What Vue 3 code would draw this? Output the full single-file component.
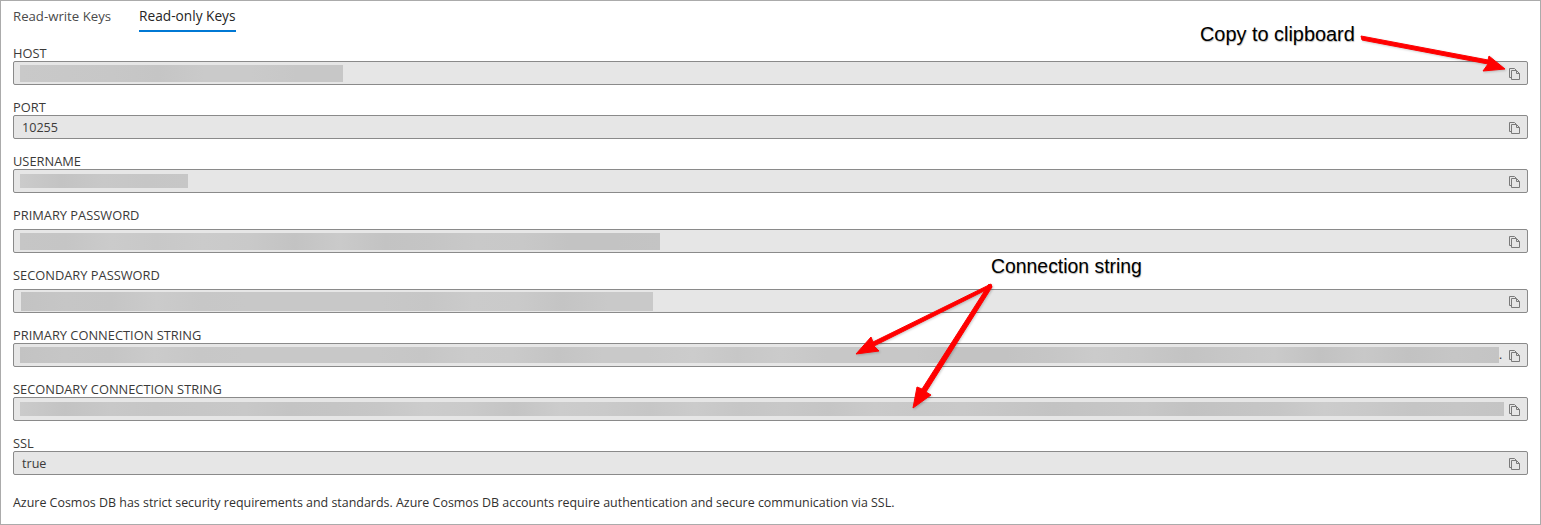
<script setup>
const fields = [
  { label: 'HOST', bar: [6, 323, 3, 17] },
  { label: 'PORT', text: '10255' },
  { label: 'USERNAME', bar: [6, 168, 5, 14] },
  { label: 'PRIMARY PASSWORD', bar: [6, 640, 3, 17], tall: true },
  { label: 'SECONDARY PASSWORD', bar: [7, 632, 2, 19], tall: true },
  { label: 'PRIMARY CONNECTION STRING', bar: [6, 1479, 3, 16], dot: true },
  { label: 'SECONDARY CONNECTION STRING', bar: [6, 1484, 5, 14] },
  { label: 'SSL', text: 'true' }
]
// Redacted values: a soft horizontal blur of shades, different for every bar.
function shade(width, seed) {
  const stops = []
  const count = Math.max(4, Math.round(width / 45))
  for (let i = 0; i <= count; i++) {
    const n = Math.sin((i + 1) * 12.9898 + seed * 78.233) * 43758.5453
    const v = Math.round(194 + (n - Math.floor(n)) * 10)
    stops.push(`rgb(${v},${v},${v}) ${((i / count) * 100).toFixed(1)}%`)
  }
  return `linear-gradient(90deg,${stops.join(',')})`
}
function barStyle(b) {
  return {
    marginLeft: b[0] + 'px',
    width: b[1] + 'px',
    height: b[3] + 'px',
    backgroundImage: shade(b[1], b[1] % 7)
  }
}
</script>

<template>
  <main class="page">
    <nav class="tabs">
      <span class="tab">Read-write Keys</span>
      <span class="tab active">Read-only Keys</span>
    </nav>
    <section class="fields">
      <div v-for="f in fields" :key="f.label" class="field" :class="{ tall: f.tall }">
        <label class="label">{{ f.label }}</label>
        <div class="input">
          <span v-if="f.text" class="value">{{ f.text }}</span>
          <span v-else class="bar" :style="barStyle(f.bar)"></span>
          <span v-if="f.dot" class="dot">.</span>
          <svg class="copy" width="11" height="12" viewBox="0 0 11 12" fill="none" stroke="#7a7a7a" stroke-width="1">
            <path d="M2.5 9.5H.5V.5H5.5L7 2" />
            <path d="M2.5 2.5V11.5H10.5V5.5L7.5 2.5H2.5Z" fill="#e6e6e6" />
            <path d="M7.5 2.5V5.5H10.5" />
          </svg>
        </div>
      </div>
    </section>
    <p class="note">Azure Cosmos DB has strict security requirements and standards. Azure Cosmos DB accounts require authentication and secure communication via SSL.</p>

    <svg class="arrows" width="1541" height="525" viewBox="0 0 1541 525">
      <g fill="#f00" stroke="#f00" stroke-width="1" stroke-linejoin="round">
        <polygon points="1361,36 1362,40 1488,64 1483,71 1505,69 1489,56 1488,60" />
        <polygon points="991,284 992,287 874,346 879,351 856,354 871,337 873,342" />
        <polygon points="989,284 992,287 926,392 931,395 913,408 917,387 922,389" />
      </g>
    </svg>
    <span class="callout copy-call">Copy to clipboard</span>
    <span class="callout conn-call">Connection string</span>
  </main>
</template>

<style>
html, body { margin: 0; background: #fff; }
</style>

<style scoped>
.page {
  position: relative;
  box-sizing: border-box;
  width: 1541px;
  height: 525px;
  border: 1px solid #ababab;
  padding: 0 12px;
  background: #fff;
  color: #323130;
  font-family: "Open Sans", "Noto Sans", sans-serif;
  font-size: 12px;
  overflow: hidden;
}
.tabs {
  display: flex;
  gap: 28px;
  height: 31px;
}
.tab {
  box-sizing: border-box;
  height: 31px;
  padding-top: 7px;
  line-height: 16px;
  font-size: 13.2px;
  color: #4a4a4a;
  white-space: nowrap;
}
.tab.active {
  color: #252525;
  font-size: 13.7px;
  font-weight: 500;
  border-bottom: 2px solid #0078d4;
}
.fields {
  display: flex;
  flex-direction: column;
  margin-top: 13px;
}
.field {
  height: 54px;
  display: flex;
  flex-direction: column;
}
.field.tall {
  height: 60px;
}
.label {
  height: 16px;
  line-height: 17px;
  font-size: 12.85px;
  color: #3b3a39;
  white-space: nowrap;
}
.field.tall .label {
  height: 22px;
}
.input {
  box-sizing: border-box;
  width: 1515px;
  height: 24px;
  display: flex;
  align-items: center;
  background: #e6e6e6;
  border: 1px solid #8a8a8a;
  border-radius: 2px;
}
.value {
  margin-left: 8px;
  font-size: 12.6px;
  color: #3b3a39;
}
.bar {
  display: block;
}
.dot {
  line-height: 1;
}
.copy {
  margin-left: auto;
  margin-right: 7px;
  margin-top: 2px;
  flex: none;
}
.note {
  margin: 6px 0 0;
  line-height: 16px;
  font-size: 12.44px;
  color: #323130;
  white-space: nowrap;
}
.arrows {
  position: absolute;
  left: -1px;
  top: -1px;
  pointer-events: none;
  filter: drop-shadow(1px 1px 1px rgba(0, 0, 0, 0.2));
}
.callout {
  position: absolute;
  font-family: "Liberation Sans", Arial, sans-serif;
  line-height: 22px;
  color: #000;
  white-space: nowrap;
  text-shadow: 0.5px 0.5px 1px rgba(0, 0, 0, 0.3);
}
.copy-call { left: 1199px; top: 22px; font-size: 19.9px; }
.conn-call { left: 990px; top: 254px; font-size: 19.4px; }
</style>
